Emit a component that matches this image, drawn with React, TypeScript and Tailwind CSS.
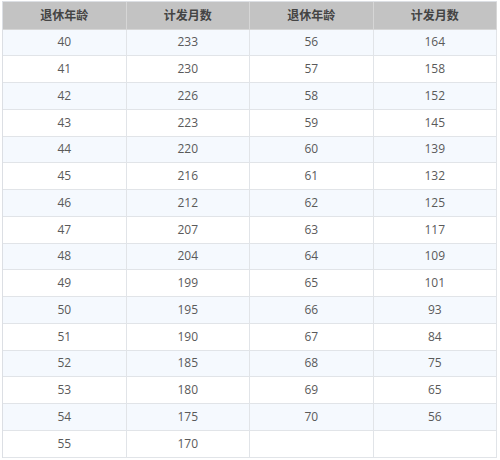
import React from "react";

const left = [
  [40, 233], [41, 230], [42, 226], [43, 223], [44, 220], [45, 216], [46, 212], [47, 207],
  [48, 204], [49, 199], [50, 195], [51, 190], [52, 185], [53, 180], [54, 175], [55, 170],
];
const right: (number | null)[][] = [
  [56, 164], [57, 158], [58, 152], [59, 145], [60, 139], [61, 132], [62, 125], [63, 117],
  [64, 109], [65, 101], [66, 93], [67, 84], [68, 75], [69, 65], [70, 56], [null, null],
];

export default function App() {
  return (
    <div className="w-[500px] h-[460px] bg-white pt-[1px] pl-[2px] overflow-hidden" style={{ fontFamily: '"Open Sans", "Noto Sans CJK SC", sans-serif' }}>
      <div className="w-[495px] border-l border-t border-[#dcdfe4]">
        <div className="grid grid-cols-4 h-[27.5px] bg-[#c3c3c3] text-[12px] font-semibold text-[#444444]" style={{ fontFamily: '"Noto Sans CJK SC", sans-serif' }}>
          {["退休年龄", "计发月数", "退休年龄", "计发月数"].map((t, i) => (
            <div key={i} className="flex items-center justify-center border-r border-b border-[#d6d6d6]">{t}</div>
          ))}
        </div>
        {left.map((l, i) => {
          const r = right[i];
          return (
            <div key={i} className={`grid grid-cols-4 h-[26.75px] text-[12px] text-[#5a5a5a] ${i % 2 === 0 ? "bg-[#f5f9fe]" : "bg-white"}`}>
              {[l[0], l[1], r[0], r[1]].map((v, j) => (
                <div key={j} className="flex items-center justify-center border-r border-b border-[#e1e4e8]">{v ?? ""}</div>
              ))}
            </div>
          );
        })}
      </div>
    </div>
  );
}
